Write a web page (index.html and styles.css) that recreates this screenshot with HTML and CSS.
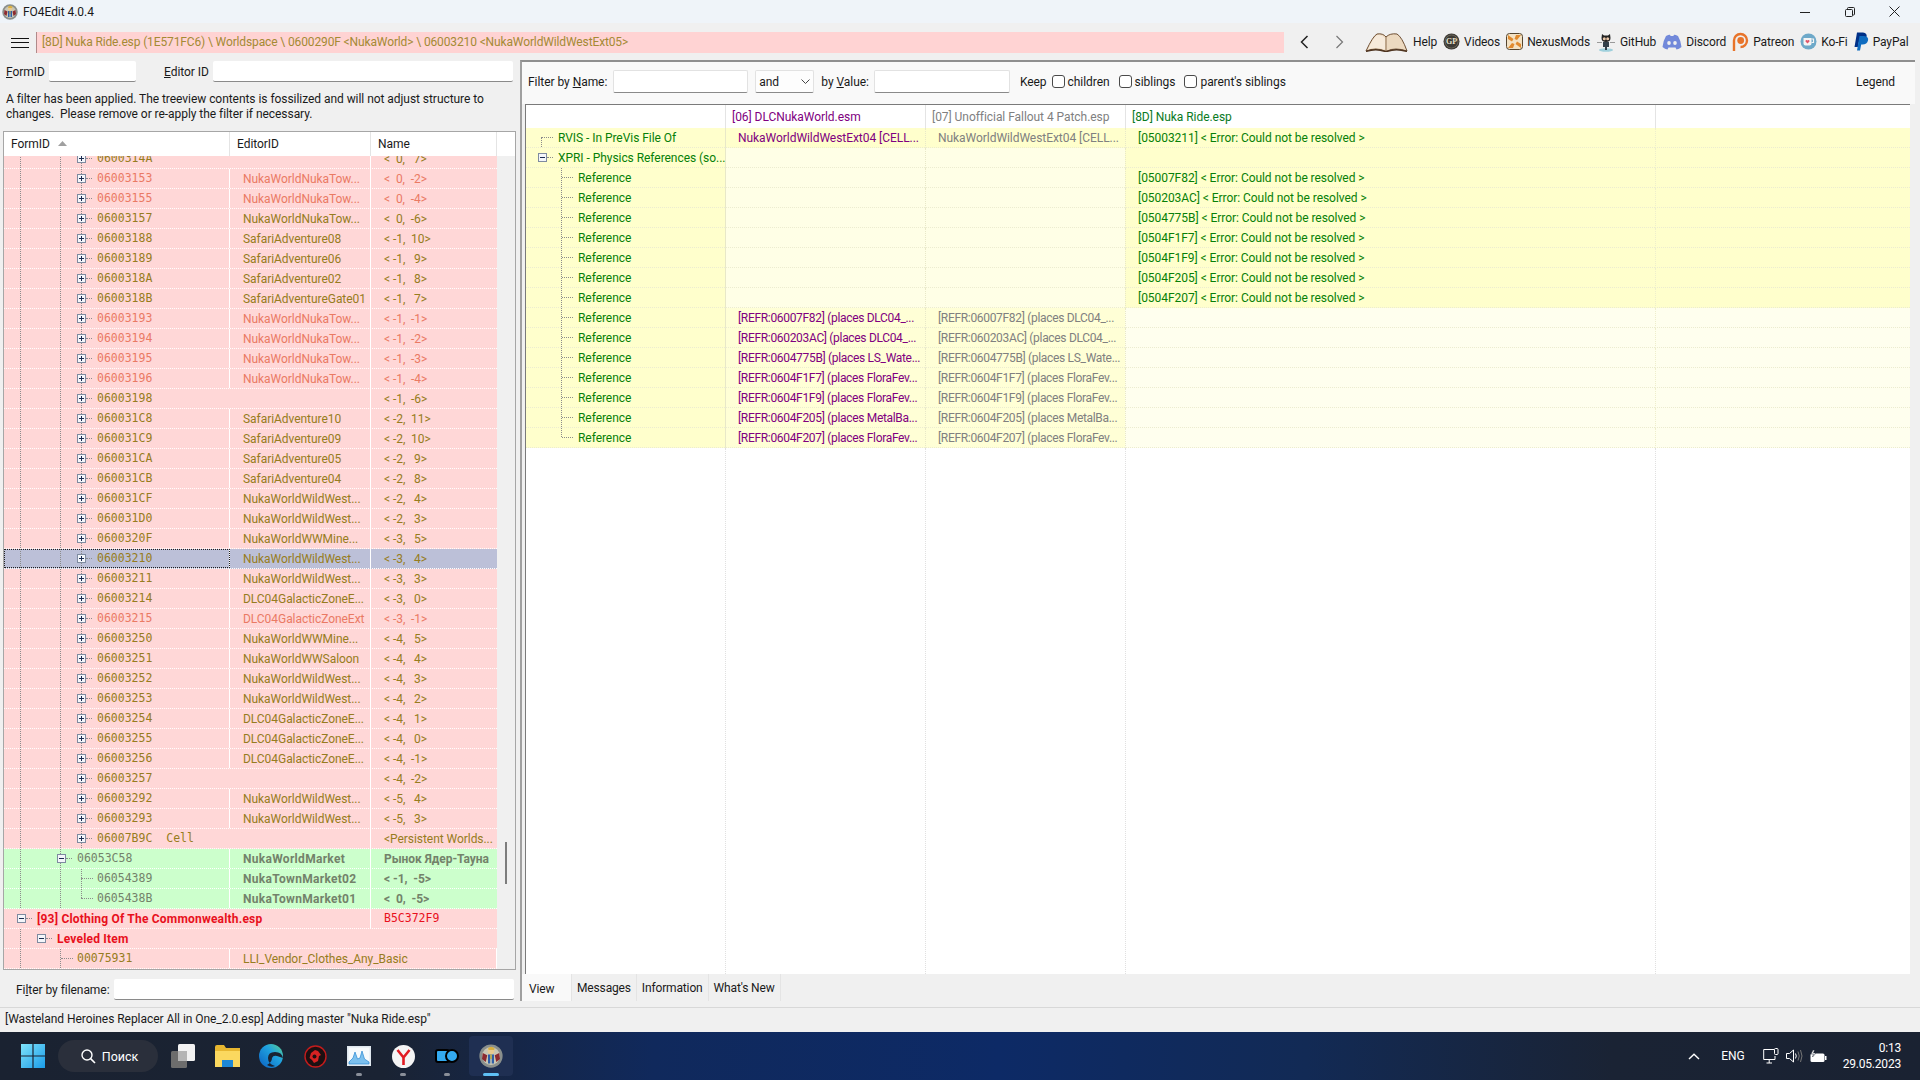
FILE: index.html
```html
<!DOCTYPE html>
<html lang="en">
<head>
  <meta charset="UTF-8">
  <title>FO4Edit 4.0.4</title>
  <link rel="stylesheet" href="styles.css">
</head>
<body>
  <svg class="defs" width="0" height="0">
    <symbol id="vault" viewBox="0 0 32 32">
      <circle cx="16" cy="16" r="15.5" fill="#8a8f8c"/>
      <circle cx="16" cy="16" r="12" fill="#c9c6b4"/>
      <path d="M5 12 L11 15 L9 24 L4 20Z M27 12 L21 15 L23 24 L28 20Z" fill="#8c2a30"/>
      <circle cx="16" cy="9" r="4.5" fill="#e8c98f"/>
      <path d="M12 6 Q16 1 21 6 L20 8 L13 8Z" fill="#d9b040"/>
      <path d="M12 14 H20 V26 H17 V20 H15 V26 H12Z" fill="#2e5fa8"/>
      <path d="M15 14 H17 V20 H15Z" fill="#e0c040"/>
    </symbol>
  </svg>

  <!-- title bar -->
  <header class="titlebar">
    <svg class="app-icon"><use href="#vault"/></svg>
    <span class="app-title">FO4Edit 4.0.4</span>
    <div class="win-buttons">
      <span class="win-btn"><svg width="10" height="10" viewBox="0 0 10 10"><path d="M0 5.5H10" stroke="#222" fill="none"/></svg></span>
      <span class="win-btn"><svg width="10" height="10" viewBox="0 0 10 10"><path d="M2.5 2.5V1.5Q2.5.5 3.5.5H8.5Q9.5.5 9.5 1.5V7Q9.5 8 8.5 8H7.5M1.5 2.5H6.5Q7.5 2.5 7.5 3.5V8.5Q7.5 9.5 6.5 9.5H1.5Q.5 9.5.5 8.5V3.5Q.5 2.5 1.5 2.5Z" stroke="#222" fill="none"/></svg></span>
      <span class="win-btn"><svg width="11" height="11" viewBox="0 0 11 11"><path d="M.5.5L10.5 10.5M10.5.5L.5 10.5" stroke="#222" fill="none"/></svg></span>
    </div>
  </header>

  <!-- toolbar -->
  <div class="toolbar">
    <div class="hamburger"><span></span><span></span><span></span></div>
    <div class="path-box">[8D] Nuka Ride.esp (1E571FC6) \ Worldspace \ 0600290F &lt;NukaWorld&gt; \ 06003210 &lt;NukaWorldWildWestExt05&gt;</div>
    <svg class="nav nav-back" width="9" height="14" viewBox="0 0 9 14"><path d="M7.5 1L1.5 7L7.5 13" stroke="#222" stroke-width="1.5" fill="none"/></svg>
    <svg class="nav nav-next" width="9" height="14" viewBox="0 0 9 14"><path d="M1.5 1L7.5 7L1.5 13" stroke="#777" stroke-width="1.2" fill="none"/></svg>
    <div class="tools">
      <span class="tool tool-help">
        <svg width="43" height="20" viewBox="0 0 43 20"><path d="M1 19 Q8 4 12 2 Q18 1 21 5 Q25 1 32 2 Q37 5 42 19 Q30 15 22 19 H20 Q11 15 1 19Z" fill="#ecd9c0" stroke="#6e4f34"/><path d="M3 17.5Q10 14.5 20 17.5V6Q17 2.5 12.5 3Q8 5.5 3 17.5Z" fill="#f6eadb"/><path d="M21 5 V18" stroke="#8d6e50"/><path d="M1 19.5 Q11 16 20 19.5 H22 Q31 16 42 19.5" stroke="#4e3420" stroke-width="1.4" fill="none"/></svg>
        Help
      </span>
      <span class="tool tool-videos">
        <svg width="17" height="17" viewBox="0 0 17 17"><circle cx="8.5" cy="8.5" r="8" fill="#3d3a34"/><circle cx="8.5" cy="8.5" r="6.5" fill="none" stroke="#85806f" stroke-width=".6"/><text x="8.5" y="11.3" text-anchor="middle" class="gp-text">GP</text></svg>
        Videos
      </span>
      <span class="tool tool-nexus">
        <svg width="17" height="17" viewBox="0 0 17 17"><rect x=".5" y=".5" width="16" height="16" rx="3" fill="#f3e2c4" stroke="#55452e"/><path d="M2 2L7.5 6L6 8.5L2 6ZM15 2L11 7L8.5 6L10 2ZM15 15L9.5 11L11 8.5L15 11ZM2 15L6 10L8.5 11L7 15Z" fill="#e08a2e"/></svg>
        NexusMods
      </span>
      <span class="tool tool-github">
        <svg width="20" height="20" viewBox="0 0 20 20"><ellipse cx="10" cy="18" rx="7" ry="1.8" fill="#9fd0dc"/><path d="M6 2L8 3.5H12L14 2L14.5 6Q14.5 10 10 10Q5.5 10 5.5 6Z" fill="#222"/><circle cx="8.3" cy="6.8" r="1.5" fill="#e8c6a8"/><circle cx="11.7" cy="6.8" r="1.5" fill="#e8c6a8"/><path d="M7 10H13V15H11V18H9V15H7Z" fill="#33404a"/><path d="M1 10.5H6M14 10.5H19" stroke="#9a9a9a"/></svg>
        GitHub
      </span>
      <span class="tool tool-discord">
        <svg width="20" height="16" viewBox="0 0 20 16"><path d="M4 2Q7 .5 8 .8L8.6 2H11.4L12 .8Q13 .5 16 2Q19 7 19.5 13Q17 15 14.5 15.5L13.5 13.5H6.5L5.5 15.5Q3 15 .5 13Q1 7 4 2Z" fill="#7289da"/><ellipse cx="7" cy="9" rx="1.8" ry="2.1" fill="#f0f0f0"/><ellipse cx="13" cy="9" rx="1.8" ry="2.1" fill="#f0f0f0"/></svg>
        Discord
      </span>
      <span class="tool tool-patreon">
        <svg width="17" height="20" viewBox="0 0 17 20"><path d="M2 19V8.5A6.5 6.5 0 1 1 8.5 15" fill="none" stroke="#e8742a" stroke-width="2.4"/><circle cx="8.7" cy="8.5" r="3.4" fill="#e8742a"/></svg>
        Patreon
      </span>
      <span class="tool tool-kofi">
        <svg width="17" height="17" viewBox="0 0 17 17"><circle cx="8.5" cy="8.5" r="8" fill="#6ea9c9"/><path d="M3.5 5H11.5V10.5Q11.5 12.5 9.5 12.5H5.5Q3.5 12.5 3.5 10.5Z" fill="#f4f4f4"/><path d="M11.5 6H13.5V9.5H11.5" fill="none" stroke="#f4f4f4" stroke-width="1.2"/><path d="M7.5 10.5L5.5 8.4Q5.2 6.8 6.6 6.9L7.5 7.6L8.4 6.9Q9.8 6.8 9.5 8.4Z" fill="#e0566a"/></svg>
        Ko-Fi
      </span>
      <span class="tool tool-paypal">
        <svg width="15" height="19" viewBox="0 0 15 19"><path d="M3 .5H9Q13.5 1 12.5 5Q11.5 9.5 6.5 9.5H5L3.8 15H.5Z" fill="#003087"/><path d="M5.5 4H10Q15 4.5 14 8.5Q13 12.5 8.5 12.5H7.2L6 18.5H3Z" fill="#0f6cc0"/></svg>
        PayPal
      </span>
    </div>
  </div>

  <div class="main">

    <!-- left: navigation tree -->
    <section class="nav-panel">
      <div class="id-filters">
        <label class="lbl-form"><u>F</u>ormID</label>
        <input class="field field-form" type="text">
        <label class="lbl-editor"><u>E</u>ditor ID</label>
        <input class="field field-editor" type="text">
      </div>
      <p class="notice">A filter has been applied. The treeview contents is fossilized and will not adjust structure to<br>changes.&nbsp; Please remove or re-apply the filter if necessary.</p>

      <div class="tree">
        <div class="tree-head">
          <div class="th th-id">FormID <svg width="9" height="5" viewBox="0 0 9 5"><path d="M0 5L4.5 0L9 5Z" fill="#a0a0a0"/></svg></div>
          <div class="th th-editor">EditorID</div>
          <div class="th th-name">Name</div>
          <div class="th-rest"></div>
        </div>
        <div class="tree-body">
          <div class="tree-rows">
            <div class="row"><div class="c0 g-abc span2"><i class="exp"></i><i class="dash"></i><b class="id">0600314A</b></div><div class="c2">&lt;  0,   7&gt;</div></div>
            <div class="row warn"><div class="c0 g-abc"><i class="exp"></i><i class="dash"></i><b class="id">06003153</b></div><div class="c1">NukaWorldNukaTow...</div><div class="c2">&lt;  0,  -2&gt;</div></div>
            <div class="row warn"><div class="c0 g-abc"><i class="exp"></i><i class="dash"></i><b class="id">06003155</b></div><div class="c1">NukaWorldNukaTow...</div><div class="c2">&lt;  0,  -4&gt;</div></div>
            <div class="row"><div class="c0 g-abc"><i class="exp"></i><i class="dash"></i><b class="id">06003157</b></div><div class="c1">NukaWorldNukaTow...</div><div class="c2">&lt;  0,  -6&gt;</div></div>
            <div class="row"><div class="c0 g-abc"><i class="exp"></i><i class="dash"></i><b class="id">06003188</b></div><div class="c1">SafariAdventure08</div><div class="c2">&lt; -1,  10&gt;</div></div>
            <div class="row"><div class="c0 g-abc"><i class="exp"></i><i class="dash"></i><b class="id">06003189</b></div><div class="c1">SafariAdventure06</div><div class="c2">&lt; -1,   9&gt;</div></div>
            <div class="row"><div class="c0 g-abc"><i class="exp"></i><i class="dash"></i><b class="id">0600318A</b></div><div class="c1">SafariAdventure02</div><div class="c2">&lt; -1,   8&gt;</div></div>
            <div class="row"><div class="c0 g-abc"><i class="exp"></i><i class="dash"></i><b class="id">0600318B</b></div><div class="c1">SafariAdventureGate01</div><div class="c2">&lt; -1,   7&gt;</div></div>
            <div class="row warn"><div class="c0 g-abc"><i class="exp"></i><i class="dash"></i><b class="id">06003193</b></div><div class="c1">NukaWorldNukaTow...</div><div class="c2">&lt; -1,  -1&gt;</div></div>
            <div class="row warn"><div class="c0 g-abc"><i class="exp"></i><i class="dash"></i><b class="id">06003194</b></div><div class="c1">NukaWorldNukaTow...</div><div class="c2">&lt; -1,  -2&gt;</div></div>
            <div class="row warn"><div class="c0 g-abc"><i class="exp"></i><i class="dash"></i><b class="id">06003195</b></div><div class="c1">NukaWorldNukaTow...</div><div class="c2">&lt; -1,  -3&gt;</div></div>
            <div class="row warn"><div class="c0 g-abc"><i class="exp"></i><i class="dash"></i><b class="id">06003196</b></div><div class="c1">NukaWorldNukaTow...</div><div class="c2">&lt; -1,  -4&gt;</div></div>
            <div class="row"><div class="c0 g-abc span2"><i class="exp"></i><i class="dash"></i><b class="id">06003198</b></div><div class="c2">&lt; -1,  -6&gt;</div></div>
            <div class="row"><div class="c0 g-abc"><i class="exp"></i><i class="dash"></i><b class="id">060031C8</b></div><div class="c1">SafariAdventure10</div><div class="c2">&lt; -2,  11&gt;</div></div>
            <div class="row"><div class="c0 g-abc"><i class="exp"></i><i class="dash"></i><b class="id">060031C9</b></div><div class="c1">SafariAdventure09</div><div class="c2">&lt; -2,  10&gt;</div></div>
            <div class="row"><div class="c0 g-abc"><i class="exp"></i><i class="dash"></i><b class="id">060031CA</b></div><div class="c1">SafariAdventure05</div><div class="c2">&lt; -2,   9&gt;</div></div>
            <div class="row"><div class="c0 g-abc"><i class="exp"></i><i class="dash"></i><b class="id">060031CB</b></div><div class="c1">SafariAdventure04</div><div class="c2">&lt; -2,   8&gt;</div></div>
            <div class="row"><div class="c0 g-abc"><i class="exp"></i><i class="dash"></i><b class="id">060031CF</b></div><div class="c1">NukaWorldWildWest...</div><div class="c2">&lt; -2,   4&gt;</div></div>
            <div class="row"><div class="c0 g-abc"><i class="exp"></i><i class="dash"></i><b class="id">060031D0</b></div><div class="c1">NukaWorldWildWest...</div><div class="c2">&lt; -2,   3&gt;</div></div>
            <div class="row"><div class="c0 g-abc"><i class="exp"></i><i class="dash"></i><b class="id">0600320F</b></div><div class="c1">NukaWorldWWMine...</div><div class="c2">&lt; -3,   5&gt;</div></div>
            <div class="row selected"><div class="c0 g-abc"><i class="exp"></i><i class="dash"></i><b class="id">06003210</b></div><div class="c1">NukaWorldWildWest...</div><div class="c2">&lt; -3,   4&gt;</div></div>
            <div class="row"><div class="c0 g-abc"><i class="exp"></i><i class="dash"></i><b class="id">06003211</b></div><div class="c1">NukaWorldWildWest...</div><div class="c2">&lt; -3,   3&gt;</div></div>
            <div class="row"><div class="c0 g-abc"><i class="exp"></i><i class="dash"></i><b class="id">06003214</b></div><div class="c1">DLC04GalacticZoneE...</div><div class="c2">&lt; -3,   0&gt;</div></div>
            <div class="row warn"><div class="c0 g-abc"><i class="exp"></i><i class="dash"></i><b class="id">06003215</b></div><div class="c1">DLC04GalacticZoneExt</div><div class="c2">&lt; -3,  -1&gt;</div></div>
            <div class="row"><div class="c0 g-abc"><i class="exp"></i><i class="dash"></i><b class="id">06003250</b></div><div class="c1">NukaWorldWWMine...</div><div class="c2">&lt; -4,   5&gt;</div></div>
            <div class="row"><div class="c0 g-abc"><i class="exp"></i><i class="dash"></i><b class="id">06003251</b></div><div class="c1">NukaWorldWWSaloon</div><div class="c2">&lt; -4,   4&gt;</div></div>
            <div class="row"><div class="c0 g-abc"><i class="exp"></i><i class="dash"></i><b class="id">06003252</b></div><div class="c1">NukaWorldWildWest...</div><div class="c2">&lt; -4,   3&gt;</div></div>
            <div class="row"><div class="c0 g-abc"><i class="exp"></i><i class="dash"></i><b class="id">06003253</b></div><div class="c1">NukaWorldWildWest...</div><div class="c2">&lt; -4,   2&gt;</div></div>
            <div class="row"><div class="c0 g-abc"><i class="exp"></i><i class="dash"></i><b class="id">06003254</b></div><div class="c1">DLC04GalacticZoneE...</div><div class="c2">&lt; -4,   1&gt;</div></div>
            <div class="row"><div class="c0 g-abc"><i class="exp"></i><i class="dash"></i><b class="id">06003255</b></div><div class="c1">DLC04GalacticZoneE...</div><div class="c2">&lt; -4,   0&gt;</div></div>
            <div class="row"><div class="c0 g-abc"><i class="exp"></i><i class="dash"></i><b class="id">06003256</b></div><div class="c1">DLC04GalacticZoneE...</div><div class="c2">&lt; -4,  -1&gt;</div></div>
            <div class="row"><div class="c0 g-abc span2"><i class="exp"></i><i class="dash"></i><b class="id">06003257</b></div><div class="c2">&lt; -4,  -2&gt;</div></div>
            <div class="row"><div class="c0 g-abc"><i class="exp"></i><i class="dash"></i><b class="id">06003292</b></div><div class="c1">NukaWorldWildWest...</div><div class="c2">&lt; -5,   4&gt;</div></div>
            <div class="row"><div class="c0 g-abc"><i class="exp"></i><i class="dash"></i><b class="id">06003293</b></div><div class="c1">NukaWorldWildWest...</div><div class="c2">&lt; -5,   3&gt;</div></div>
            <div class="row"><div class="c0 g-abc span2"><i class="exp"></i><i class="dash"></i><b class="id">06007B9C&nbsp; Cell</b></div><div class="c2">&lt;Persistent Worlds...</div></div>
            <div class="row green"><div class="c0 g-ab d2"><i class="exp minus"></i><i class="dash"></i><b class="id">06053C58</b></div><div class="c1">NukaWorldMarket</div><div class="c2">Рынок Ядер-Тауна</div></div>
            <div class="row green"><div class="c0 g-abc d3leaf"><i class="twig"></i><b class="id">06054389</b></div><div class="c1">NukaTownMarket02</div><div class="c2">&lt; -1,  -5&gt;</div></div>
            <div class="row green"><div class="c0 g-end d3leaf"><i class="twig"></i><b class="id">0605438B</b></div><div class="c1">NukaTownMarket01</div><div class="c2">&lt;  0,  -5&gt;</div></div>
            <div class="row file"><div class="c0 d0 span2"><i class="exp minus"></i><i class="dash"></i><span class="strong">[93] Clothing Of The Commonwealth.esp</span></div><div class="c2"><b class="id">B5C372F9</b></div></div>
            <div class="row file"><div class="c0 g-a d1 span3"><i class="exp minus"></i><i class="dash"></i><span class="strong">Leveled Item</span></div></div>
            <div class="row"><div class="c0 g-ab d2leaf"><i class="twig"></i><b class="id">00075931</b></div><div class="c1 span2">LLI_Vendor_Clothes_Any_Basic</div></div>
          </div>
          <div class="scroll-track"><span class="scroll-thumb"></span></div>
        </div>
      </div>

      <div class="file-filter">
        <label>Fi<u>l</u>ter by filename:</label>
        <input class="field field-file" type="text">
      </div>
    </section>

    <!-- right: record view -->
    <section class="view-panel">
      <div class="view-filter">
        <label>Filter by <u>N</u>ame:</label>
        <input class="field field-name" type="text">
        <div class="combo">and <svg width="9" height="5" viewBox="0 0 9 5"><path d="M.5.5L4.5 4.5L8.5.5" stroke="#444" fill="none"/></svg></div>
        <label>by <u>V</u>alue:</label>
        <input class="field field-value" type="text">
        <label class="lbl-keep">Keep</label>
        <label class="check"><input type="checkbox"> children</label>
        <label class="check"><input type="checkbox"> siblings</label>
        <label class="check"><input type="checkbox"> parent's siblings</label>
        <span class="legend">Legend</span>
      </div>

      <div class="record">
        <div class="rec-head">
          <div></div>
          <div class="rh rh-master">[06] DLCNukaWorld.esm</div>
          <div class="rh rh-patch">[07] Unofficial Fallout 4 Patch.esp</div>
          <div class="rh rh-mod">[8D] Nuka Ride.esp</div>
          <div class="rh"></div>
        </div>
        <div class="rec-row"><div class="r0 rvis"><i class="twig"></i>RVIS - In PreVis File Of</div><div class="r1">NukaWorldWildWestExt04 [CELL...</div><div class="r2">NukaWorldWildWestExt04 [CELL...</div><div class="r3">[05003211] &lt; Error: Could not be resolved &gt;</div><div class="r4"></div></div>
        <div class="rec-row"><div class="r0 xpri"><i class="exp minus"></i><i class="dash"></i>XPRI - Physics References (so...</div><div class="r1 pale"></div><div class="r2 pale"></div><div class="r3"></div><div class="r4"></div></div>
        <div class="rec-row"><div class="r0 ref"><i class="twig"></i>Reference</div><div class="r1 pale"></div><div class="r2 pale"></div><div class="r3">[05007F82] &lt; Error: Could not be resolved &gt;</div><div class="r4"></div></div>
        <div class="rec-row"><div class="r0 ref"><i class="twig"></i>Reference</div><div class="r1 pale"></div><div class="r2 pale"></div><div class="r3">[050203AC] &lt; Error: Could not be resolved &gt;</div><div class="r4"></div></div>
        <div class="rec-row"><div class="r0 ref"><i class="twig"></i>Reference</div><div class="r1 pale"></div><div class="r2 pale"></div><div class="r3">[0504775B] &lt; Error: Could not be resolved &gt;</div><div class="r4"></div></div>
        <div class="rec-row"><div class="r0 ref"><i class="twig"></i>Reference</div><div class="r1 pale"></div><div class="r2 pale"></div><div class="r3">[0504F1F7] &lt; Error: Could not be resolved &gt;</div><div class="r4"></div></div>
        <div class="rec-row"><div class="r0 ref"><i class="twig"></i>Reference</div><div class="r1 pale"></div><div class="r2 pale"></div><div class="r3">[0504F1F9] &lt; Error: Could not be resolved &gt;</div><div class="r4"></div></div>
        <div class="rec-row"><div class="r0 ref"><i class="twig"></i>Reference</div><div class="r1 pale"></div><div class="r2 pale"></div><div class="r3">[0504F205] &lt; Error: Could not be resolved &gt;</div><div class="r4"></div></div>
        <div class="rec-row"><div class="r0 ref"><i class="twig"></i>Reference</div><div class="r1 pale"></div><div class="r2 pale"></div><div class="r3">[0504F207] &lt; Error: Could not be resolved &gt;</div><div class="r4"></div></div>
        <div class="rec-row refs"><div class="r0 ref"><i class="twig"></i>Reference</div><div class="r1">[REFR:06007F82] (places DLC04_...</div><div class="r2">[REFR:06007F82] (places DLC04_...</div><div class="r3"></div><div class="r4"></div></div>
        <div class="rec-row refs"><div class="r0 ref"><i class="twig"></i>Reference</div><div class="r1">[REFR:060203AC] (places DLC04_...</div><div class="r2">[REFR:060203AC] (places DLC04_...</div><div class="r3"></div><div class="r4"></div></div>
        <div class="rec-row refs"><div class="r0 ref"><i class="twig"></i>Reference</div><div class="r1">[REFR:0604775B] (places LS_Wate...</div><div class="r2">[REFR:0604775B] (places LS_Wate...</div><div class="r3"></div><div class="r4"></div></div>
        <div class="rec-row refs"><div class="r0 ref"><i class="twig"></i>Reference</div><div class="r1">[REFR:0604F1F7] (places FloraFev...</div><div class="r2">[REFR:0604F1F7] (places FloraFev...</div><div class="r3"></div><div class="r4"></div></div>
        <div class="rec-row refs"><div class="r0 ref"><i class="twig"></i>Reference</div><div class="r1">[REFR:0604F1F9] (places FloraFev...</div><div class="r2">[REFR:0604F1F9] (places FloraFev...</div><div class="r3"></div><div class="r4"></div></div>
        <div class="rec-row refs"><div class="r0 ref"><i class="twig"></i>Reference</div><div class="r1">[REFR:0604F205] (places MetalBa...</div><div class="r2">[REFR:0604F205] (places MetalBa...</div><div class="r3"></div><div class="r4"></div></div>
        <div class="rec-row refs"><div class="r0 ref ref-last"><i class="twig"></i>Reference</div><div class="r1">[REFR:0604F207] (places FloraFev...</div><div class="r2">[REFR:0604F207] (places FloraFev...</div><div class="r3"></div><div class="r4"></div></div>
        <div class="rec-empty"><div></div><div></div><div></div><div></div><div></div></div>
      </div>

      <div class="tabs">
        <span class="tab active">View</span>
        <span class="tab">Messages</span>
        <span class="tab">Information</span>
        <span class="tab">What's New</span>
      </div>
    </section>
  </div>

  <div class="statusbar">[Wasteland Heroines Replacer All in One_2.0.esp] Adding master "Nuka Ride.esp"</div>

  <!-- windows taskbar -->
  <footer class="taskbar">
    <span class="start">
      <svg width="24" height="24" viewBox="0 0 24 24">
        <defs><linearGradient id="win" x1="0" y1="0" x2="1" y2="1"><stop offset="0" stop-color="#7fe3fb"/><stop offset="1" stop-color="#1a9be8"/></linearGradient></defs>
        <path d="M0 0H11.4V11.4H0ZM12.6 0H24V11.4H12.6ZM0 12.6H11.4V24H0ZM12.6 12.6H24V24H12.6Z" fill="url(#win)"/>
      </svg>
    </span>
    <span class="search">
      <svg width="15" height="15" viewBox="0 0 15 15"><circle cx="6" cy="6" r="5" fill="none" stroke="#fff" stroke-width="1.4"/><path d="M9.6 9.6L14 14" stroke="#fff" stroke-width="1.6"/></svg>
      Поиск
    </span>
    <span class="task">
      <svg width="24" height="24" viewBox="0 0 24 24"><rect x="0" y="7" width="16" height="17" rx="1.5" fill="#6d6d6d"/><rect x="7" y="0" width="17" height="17" rx="1.5" fill="#f2f2f2"/><rect x="7" y="7" width="9" height="10" fill="#b5b5b5"/></svg>
    </span>
    <span class="task">
      <svg width="25" height="22" viewBox="0 0 25 22"><path d="M0 2Q0 0 2 0H9L11 3H25V22H0Z" fill="#e8b730"/><path d="M0 6H25V22H0Z" fill="#fbd85f"/><rect x="7" y="15" width="11" height="7" fill="#1e88d6"/></svg>
    </span>
    <span class="task">
      <svg width="24" height="24" viewBox="0 0 24 24"><defs><linearGradient id="edge" x1="0" y1="1" x2="1" y2="0"><stop offset="0" stop-color="#0b5fc0"/><stop offset=".6" stop-color="#1fa2e0"/><stop offset="1" stop-color="#5ed28a"/></linearGradient></defs><circle cx="12" cy="12" r="12" fill="url(#edge)"/><path d="M24 14Q23 8 16 8Q9 8 9 14Q9 20 16 22Q12 24 8 21Q13 18 13 14Q14 11 18 12Q21 13 24 14Z" fill="#1a2232"/></svg>
    </span>
    <span class="task">
      <svg width="23" height="23" viewBox="0 0 23 23"><circle cx="11.5" cy="11.5" r="10.5" fill="#1c1012" stroke="#c21c1c" stroke-width="1.4"/><path d="M11 5L14 6L17 10L15 11L14 16L10 18L8 15L5.5 13L7 8Z" fill="#d62222"/><circle cx="10.5" cy="11.5" r="2" fill="#1c1012"/></svg>
    </span>
    <span class="task running">
      <svg width="24" height="20" viewBox="0 0 24 20"><rect width="24" height="20" fill="#dfe7ee"/><rect x="1.5" y="1.5" width="21" height="17" fill="#f7fafc"/><path d="M2 16L6 12L8 6L10.5 13L13 12L15 5L17.5 13L22 16V18H2Z" fill="#7cc0ee" stroke="#2a88d2" stroke-width=".7"/></svg>
    </span>
    <span class="task running">
      <svg width="23" height="23" viewBox="0 0 23 23"><circle cx="11.5" cy="11.5" r="11.5" fill="#f4f4f4"/><path d="M5.5 5L11.5 12.5L17.5 5M11.5 12.5V20" stroke="#e11b22" stroke-width="2.6" fill="none"/></svg>
    </span>
    <span class="task running">
      <svg width="24" height="14" viewBox="0 0 24 14"><rect x="1" y="1" width="13" height="12" rx="2" fill="#33aaf0" stroke="#000" stroke-width="2"/><circle cx="17" cy="7" r="6" fill="#33aaf0" stroke="#000" stroke-width="2"/></svg>
    </span>
    <span class="task active">
      <svg width="24" height="24"><use href="#vault"/></svg>
      <i class="active-bar"></i>
    </span>

    <div class="tray">
      <svg class="tray-chevron" width="12" height="7" viewBox="0 0 12 7"><path d="M1 6L6 1.2L11 6" stroke="#fff" stroke-width="1.4" fill="none"/></svg>
      <span class="tray-lang">ENG</span>
      <svg class="tray-net" width="17" height="16" viewBox="0 0 17 16"><path d="M11 1.5H.7V11.5H12V8M3.5 15H9M6.2 11.5V15" stroke="#fff" fill="none"/><rect x="11.5" y=".5" width="3.5" height="6" rx="1" stroke="#fff" fill="#1a2232"/></svg>
      <svg class="tray-sound" width="17" height="14" viewBox="0 0 17 14"><path d="M.5 4.5H3.5L7.5 1V13L3.5 9.5H.5Z" stroke="#fff" fill="none"/><path d="M9.5 4.5Q11 7 9.5 9.5" stroke="#fff" fill="none"/><path d="M12 2.5Q14.5 7 12 11.5M14.5 1Q17.5 7 14.5 13" stroke="#777" fill="none"/></svg>
      <svg class="tray-batt" width="17" height="13" viewBox="0 0 17 13"><rect x=".5" y="3.5" width="14" height="8.5" rx="1.5" fill="#fff"/><rect x="15" y="6" width="1.5" height="4" fill="#fff"/><path d="M3 0L1 4H3.5L2.5 7L6 3H3.5L4.5 0Z" fill="#fff" stroke="#1a2232" stroke-width=".5"/></svg>
      <div class="clock"><div>0:13</div><div>29.05.2023</div></div>
    </div>
  </footer>
</body>
</html>
```

FILE: styles.css
```css
* {
  box-sizing: border-box;
}
html, body {
  margin: 0;
  padding: 0;
}
body {
  width: 1920px;
  height: 1080px;
  overflow: hidden;
  display: flex;
  flex-direction: column;
  background: #f0f0f0;
  color: #1a1a1a;
  font-family: Roboto, "Noto Sans", sans-serif;
  font-size: 12px;
  letter-spacing: -0.05px;
}
.defs {
  position: absolute;
}

/* title bar */
.titlebar {
  height: 23px;
  display: flex;
  align-items: center;
  background: #eff4f9;
  flex: none;
}
.app-icon {
  width: 16px;
  height: 16px;
  margin-left: 2px;
}
.app-title {
  margin-left: 5px;
}
.win-buttons {
  margin-left: auto;
  margin-right: 3px;
  display: flex;
}
.win-btn {
  width: 45px;
  height: 20px;
  display: flex;
  align-items: center;
  justify-content: center;
}

/* toolbar */
.toolbar {
  height: 37px;
  display: flex;
  align-items: center;
  flex: none;
  padding-left: 11px;
}
.hamburger {
  width: 18px;
  height: 10px;
  display: flex;
  flex-direction: column;
  justify-content: space-between;
  margin-top: 2px;
}
.hamburger span {
  height: 1px;
  background: #111;
}
.path-box {
  width: 1248px;
  height: 21px;
  margin-left: 7px;
  margin-top: 1px;
  padding-left: 5px;
  line-height: 20px;
  background: #ffd3d3;
  border-left: 1px solid #b08a8a;
  color: #a48a34;
  letter-spacing: -0.13px;
}
.nav-back {
  margin-left: 16px;
}
.nav-next {
  margin-left: 26px;
}
.tools {
  margin-left: 21px;
  display: flex;
  align-items: center;
}
.tool {
  display: flex;
  align-items: center;
  gap: 4px;
  margin-right: 6px;
  white-space: nowrap;
  letter-spacing: -0.12px;
}
.tool-help svg {
  margin-right: 1px;
}
.gp-text {
  font: bold 8px "Liberation Serif", serif;
  fill: #e8e2cc;
}

/* shared inputs */
.field {
  display: block;
  height: 21px;
  border: 0;
  border-bottom: 1px solid #8a8a8a;
  border-radius: 2px;
  background: #fff;
  padding: 0;
  margin: 0;
}

.main {
  height: 947px;
  display: flex;
  flex: none;
}

/* left panel */
.nav-panel {
  width: 520px;
  flex: none;
  display: flex;
  flex-direction: column;
}
.id-filters {
  display: flex;
  align-items: center;
  height: 21px;
  margin-top: 1px;
  padding-left: 6px;
}
.lbl-form {
  width: 43px;
}
.field-form {
  width: 87px;
}
.lbl-editor {
  margin-left: 28px;
  width: 49px;
}
.field-editor {
  width: 300px;
}
.notice {
  margin: 10px 0 0;
  padding-left: 6px;
  line-height: 15px;
  height: 39px;
}
.tree {
  width: 513px;
  height: 839px;
  margin-left: 3px;
  border: 1px solid #a6a6a6;
  display: flex;
  flex-direction: column;
  background: #f0f0f0;
}
.tree-head {
  height: 24px;
  flex: none;
  display: grid;
  grid-template-columns: 226px 141px 126px 1fr;
  background: #fff;
}
.th {
  line-height: 25px;
  padding-left: 7px;
  border-right: 1px solid #e4e4e4;
}
.th-id svg {
  margin-left: 5px;
  vertical-align: 2px;
}
.tree-body {
  flex: 1;
  display: flex;
  overflow: hidden;
}
.tree-rows {
  width: 493px;
  margin-top: -7px;
  flex: none;
}
.scroll-track {
  flex: 1;
  position: relative;
}
.scroll-thumb {
  position: absolute;
  left: 8px;
  top: 686px;
  width: 2px;
  height: 42px;
  background: #7d7d7d;
}

/* tree rows */
.row {
  height: 20px;
  display: grid;
  grid-template-columns: 226px 141px 126px;
  background: #ffd7d7;
  color: #967c20;
  border-bottom: 1px dotted #fff;
}
.row.warn {
  color: #ea7a64;
}
.row.green {
  background: #ccffcc;
  color: #73826a;
  font-weight: 700;
}
.row.green .c1 {
  letter-spacing: 0.3px;
}
.row.green .id {
  font-weight: 400;
}
.row.file {
  color: #e8101c;
}
.row.selected {
  background: #bcc0d8;
}
.row.selected .c0 {
  outline: 1px dotted #222;
  outline-offset: -1px;
}
.c0, .c1, .c2 {
  height: 19px;
  display: flex;
  align-items: center;
  white-space: pre;
  overflow: hidden;
}
.c0 {
  padding-left: 73px;
  border-right: 1px solid #fff;
  background-repeat: no-repeat;
}
.c1 {
  padding-left: 13px;
  border-right: 1px solid #fff;
}
.c2 {
  padding-left: 13px;
  border-right: 1px solid transparent;
}
.span2 {
  grid-column: span 2;
}
.span3 {
  grid-column: span 3;
  border-right: 0;
}
.g-a, .g-ab, .g-abc, .g-end {
  --dots: repeating-linear-gradient(to bottom, #8c8c8c 0 1px, transparent 1px 2px);
}
.g-a {
  background-image: var(--dots);
  background-size: 1px 100%;
  background-position: 16px 0;
}
.g-ab {
  background-image: var(--dots), var(--dots);
  background-size: 1px 100%, 1px 100%;
  background-position: 16px 0, 56px 0;
}
.g-abc {
  background-image: var(--dots), var(--dots), var(--dots);
  background-size: 1px 100%, 1px 100%, 1px 100%;
  background-position: 16px 0, 56px 0, 77px 0;
}
.g-end {
  background-image: var(--dots), var(--dots), var(--dots);
  background-size: 1px 100%, 1px 100%, 1px 50%;
  background-position: 16px 0, 56px 0, 77px 0;
}
.d0 {
  padding-left: 13px;
}
.d1 {
  padding-left: 33px;
}
.d2 {
  padding-left: 53px;
}
.d2leaf {
  padding-left: 57px;
}
.d3leaf {
  padding-left: 77px;
}
.exp {
  position: relative;
  flex: none;
  width: 9px;
  height: 9px;
  border: 1px solid #7f8ba0;
  background: #f4f6fa;
}
.exp::before, .exp::after {
  content: "";
  position: absolute;
  background: #1a2a50;
}
.exp::before {
  left: 1px;
  top: 3px;
  width: 5px;
  height: 1px;
}
.exp::after {
  left: 3px;
  top: 1px;
  width: 1px;
  height: 5px;
}
.exp.minus::after {
  display: none;
}
.dash {
  flex: none;
  width: 6px;
  margin-right: 5px;
  border-top: 1px dotted #8c8c8c;
}
.twig {
  flex: none;
  width: 12px;
  margin-right: 4px;
  border-top: 1px dotted #8c8c8c;
}
.id {
  font-family: "DejaVu Sans Mono", monospace;
  font-size: 11.5px;
  font-weight: 400;
  letter-spacing: 0;
  margin-top: -1px;
}
.strong {
  font-weight: 700;
  letter-spacing: 0.2px;
}
.row.file .id {
  font-weight: 400;
}

/* filename filter */
.file-filter {
  display: flex;
  align-items: center;
  height: 21px;
  margin-top: 9px;
  padding-left: 16px;
}
.file-filter label {
  width: 98px;
}
.field-file {
  width: 400px;
}

/* right panel */
.view-panel {
  width: 1395px;
  height: 941px;
  flex: none;
  display: flex;
  flex-direction: column;
  border-top: 2px solid #8f8f8f;
  border-left: 2px solid #a0a0a0;
}
.view-filter {
  height: 42px;
  flex: none;
  display: flex;
  align-items: center;
  padding-left: 6px;
  padding-bottom: 3px;
  background: #f9f9f9;
}
.field-name, .field-value, .combo {
  height: 23px;
  border: 1px solid #e2e2e2;
  border-bottom-color: #8a8a8a;
}
.field-name {
  width: 135px;
  margin-left: 6px;
}
.combo {
  width: 59px;
  margin-left: 7px;
  margin-right: 7px;
  padding: 0 3px;
  display: flex;
  align-items: center;
  justify-content: space-between;
  background: #fdfdfd;
  border-radius: 2px;
}
.field-value {
  width: 136px;
  margin-left: 5px;
}
.lbl-keep {
  margin-left: 10px;
}
.check {
  display: flex;
  align-items: center;
  gap: 3px;
  margin-left: 5px;
}
.check input {
  appearance: none;
  width: 13px;
  height: 13px;
  margin: 0;
  border: 1px solid #4a4a4a;
  border-radius: 3px;
  background: #fff;
}
.check + .check {
  margin-left: 9px;
}
.legend {
  margin-left: auto;
  margin-right: 20px;
}

/* record view */
.record {
  width: 1385px;
  margin-left: 3px;
  flex: 1;
  display: flex;
  flex-direction: column;
  border-top: 1px solid #7a7a7a;
  border-left: 1px solid #7a7a7a;
  background: #fff;
}
.rec-head, .rec-row, .rec-empty {
  display: grid;
  grid-template-columns: 199px 200px 200px 530px 1fr;
}
.rec-head {
  height: 23px;
  flex: none;
}
.rh {
  line-height: 24px;
  padding-left: 6px;
  border-left: 1px solid #e4e4e4;
}
.rh-master {
  color: #800080;
}
.rh-patch {
  color: #808080;
}
.rh-mod {
  color: #0a7a1e;
}
.rec-row {
  height: 20px;
  flex: none;
}
.rec-row > div {
  display: flex;
  align-items: center;
  height: 20px;
  padding-left: 12px;
  white-space: nowrap;
  overflow: hidden;
  background: #ffffcc;
  border-bottom: 1px dotted #ececd0;
}
.rec-row:first-of-type > div {
  border-bottom-color: #9a9a9a;
}
.rec-row > .r0 {
  color: #078007;
  padding-left: 0;
  background-repeat: no-repeat;
}
.rec-row > .r1 {
  color: #800080;
  border-left: 1px solid #e8e8c8;
}
.rec-row > .r2 {
  color: #808080;
  border-left: 1px dotted #e8e8c8;
}
.rec-row > .r3 {
  color: #078007;
  border-left: 1px dotted #e8e8c8;
}
.rec-row > .r4 {
  border-left: 1px dotted #eeeecc;
}
.rec-row > .pale {
  background: #ffffe6;
}
.refs > .r1, .refs > .r2 {
  letter-spacing: -0.32px;
}
.rec-row.refs > .r1, .rec-row.refs > .r2 {
  background: #ffffd6;
}
.rec-row.refs > .r3, .rec-row.refs > .r4 {
  background: #ffffee;
}
.rec-row > .rvis {
  background-image: repeating-linear-gradient(to bottom, #8c8c8c 0 1px, transparent 1px 2px);
  background-size: 1px 100%;
  background-position: 15px 10px;
}
.rvis .twig {
  margin-left: 15px;
  margin-right: 5px;
  width: 12px;
}
.xpri .exp {
  margin-left: 12px;
}
.rec-row > .ref {
  background-image: repeating-linear-gradient(to bottom, #8c8c8c 0 1px, transparent 1px 2px);
  background-size: 1px 100%;
  background-position: 35px 0;
}
.rec-row > .ref-last {
  background-size: 1px 50%;
}
.ref .twig {
  margin-left: 36px;
  margin-right: 5px;
  width: 11px;
}
.rec-empty {
  flex: 1;
}
.rec-empty > div + div {
  border-left: 1px dotted #e0e0e0;
}

/* tabs */
.tabs {
  height: 27px;
  flex: none;
  display: flex;
  align-items: center;
}
.tab {
  padding: 0 5px;
  height: 27px;
  line-height: 29px;
  border-right: 1px solid #e4e4e4;
  letter-spacing: -0.15px;
}
.tab.active {
  width: 50px;
  padding-left: 7px;
  padding-top: 1px;
  background: #f9f9f9;
}

/* status bar */
.statusbar {
  height: 25px;
  flex: none;
  border-top: 1px solid #d8d8d8;
  padding-left: 5px;
  line-height: 23px;
}

/* taskbar */
.taskbar {
  height: 48px;
  flex: none;
  display: flex;
  align-items: center;
  color: #fff;
  background: linear-gradient(90deg, #1a2231 0, #1a2333 20%, #10295c 34%, #0d2a66 52%, #122a55 68%, #1a2334 84%, #1a2232 100%);
}
.start {
  margin-left: 21px;
  width: 24px;
  height: 24px;
  display: block;
}
.search {
  width: 100px;
  height: 32px;
  margin-left: 13px;
  margin-right: 3px;
  padding-left: 3px;
  border-radius: 16px;
  background: #2a2f3b;
  display: flex;
  align-items: center;
  justify-content: center;
  gap: 6px;
  font-size: 12.5px;
}
.task {
  position: relative;
  width: 44px;
  height: 40px;
  display: flex;
  align-items: center;
  justify-content: center;
}
.task.running::after {
  content: "";
  position: absolute;
  left: 19px;
  bottom: 0;
  width: 6px;
  height: 3px;
  border-radius: 2px;
  background: #8a8f99;
}
.task.active {
  border-radius: 4px;
  background: #1f2f52;
}
.active-bar {
  position: absolute;
  left: 14px;
  bottom: 0;
  width: 16px;
  height: 3px;
  border-radius: 2px;
  background: #5fc0f5;
}
.tray {
  margin-left: auto;
  display: flex;
  align-items: center;
  padding-right: 19px;
}
.tray-lang {
  margin-left: 21px;
  font-size: 12px;
}
.tray-net {
  margin-left: 18px;
}
.tray-sound {
  margin-left: 6px;
}
.tray-batt {
  margin-left: 7px;
}
.clock {
  margin-left: 16px;
  text-align: right;
  font-size: 12px;
  line-height: 16px;
  letter-spacing: -0.2px;
}
```
